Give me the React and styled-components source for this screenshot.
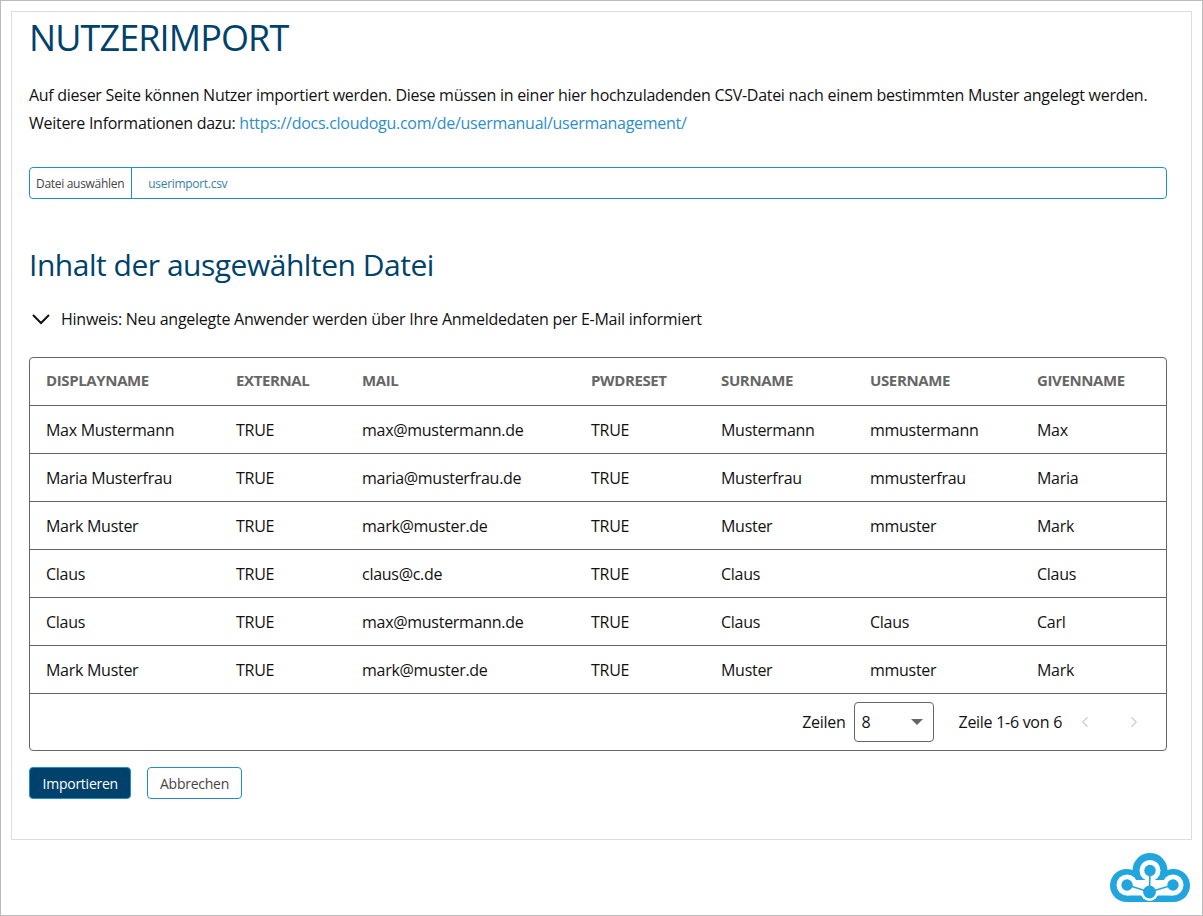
import styled, { createGlobalStyle } from "styled-components";
import { ChevronLeft, ChevronRight } from "lucide-react";

const GlobalStyle = createGlobalStyle`
  html, body {
    margin: 0;
    padding: 0;
    background: white;
    font-family: "Open Sans", sans-serif;
    letter-spacing: -0.0175em;
    color: #111;
  }
  * {
    box-sizing: border-box;
  }
`;

const Page = styled.div`
  width: 1203px;
  height: 916px;
  border: 1px solid #bbb;
  padding: 10px;
  position: relative;
  overflow: hidden;
`;

const Panel = styled.div`
  width: 1181px;
  height: 829px;
  border: 1px solid #ddd;
  padding: 0 24px 0 17px;
`;

const Title = styled.h1`
  margin: 0;
  height: 51px;
  font-size: 36px;
  line-height: 51px;
  font-weight: 400;
  letter-spacing: -0.025em;
  color: #00426b;
`;

const Intro = styled.p`
  margin: 18px 0 0;
  font-size: 16px;
  line-height: 28px;
  white-space: nowrap;
  letter-spacing: -0.0175em;
`;

const DocLink = styled.a`
  color: #2d8ec9;
  text-decoration: none;
`;

const FileInput = styled.div`
  margin-top: 30px;
  height: 32px;
  display: flex;
  align-items: center;
  border: 1px solid #1f8fc9;
  border-radius: 4px;
  font-size: 12px;
  letter-spacing: -0.025em;
`;

const FileLabel = styled.div`
  height: 100%;
  padding: 0 7px 0 6px;
  display: flex;
  align-items: center;
  border-right: 1px solid #1f8fc9;
  color: #444;
`;

const FileName = styled.div`
  padding-left: 16px;
  color: #3a7ea8;
`;

const SubTitle = styled.h2`
  margin: 42px 0 0;
  height: 48px;
  font-size: 30px;
  line-height: 48px;
  font-weight: 400;
  letter-spacing: -0.016em;
  color: #00426b;
`;

const Hint = styled.div`
  margin-top: 18px;
  height: 24px;
  display: flex;
  align-items: center;
  gap: 11px;
  padding-left: 3px;
  font-size: 16px;
  letter-spacing: -0.016em;
`;

const TableBox = styled.div`
  margin-top: 26px;
  height: 394px;
  border: 1px solid #666;
  border-radius: 4px;
`;

const Table = styled.table`
  width: 100%;
  table-layout: fixed;
  border-collapse: collapse;
  font-size: 16px;
  letter-spacing: -0.0175em;
`;

const Cell = styled.td`
  height: 48px;
  padding: 2px 0 0 16px;
  border-bottom: 1px solid #666;
  white-space: nowrap;
`;

const HeadCell = styled.th`
  height: 47px;
  padding: 0 0 2px 16px;
  border-bottom: 1px solid #666;
  text-align: left;
  font-size: 15px;
  font-weight: 700;
  letter-spacing: -0.025em;
  color: #666;
`;

const Pager = styled.div`
  height: 57px;
  display: flex;
  align-items: center;
  justify-content: flex-end;
  padding-right: 23px;
  font-size: 16px;
  letter-spacing: -0.0175em;
`;

const PageSelect = styled.div`
  width: 80px;
  height: 40px;
  margin: 0 25px 0 8px;
  padding: 0 10px 0 7px;
  display: flex;
  align-items: center;
  justify-content: space-between;
  border: 1px solid #666;
  border-radius: 4px;
`;

const Caret = styled.span`
  width: 0;
  height: 0;
  border-left: 6px solid transparent;
  border-right: 6px solid transparent;
  border-top: 6px solid #666;
`;

const PagerArrows = styled.div`
  display: flex;
  align-items: center;
  gap: 31px;
  margin-left: 14px;
  color: #ccc;
`;

const Actions = styled.div`
  margin-top: 16px;
  display: flex;
  gap: 16px;
`;

const Button = styled.button`
  height: 32px;
  padding: 0 ${(p) => (p.$primary ? "12.5px" : "11.5px")};
  border: 1px solid #1f8fc9;
  border-radius: 4px;
  background: ${(p) => (p.$primary ? "#00426b" : "white")};
  color: ${(p) => (p.$primary ? "white" : "#444")};
  font-family: inherit;
  font-size: 14px;
  letter-spacing: -0.0175em;
`;

const LogoWrap = styled.div`
  position: absolute;
  right: 12px;
  bottom: 12px;
  width: 80px;
  height: 50px;
`;

const LOGO_BLUE = "#20a5de";

const Logo = () => (
  <LogoWrap>
    <svg width="80" height="50" viewBox="0 0 80 50">
      <g fill={LOGO_BLUE}>
        <circle cx="40" cy="17.5" r="17.5" />
        <circle cx="16.5" cy="32.5" r="16.5" />
        <circle cx="63.5" cy="32.5" r="16.5" />
        <rect x="16" y="24" width="48" height="25" />
      </g>
      <g fill="white">
        <circle cx="40" cy="17.5" r="10.5" />
        <circle cx="17" cy="32" r="10.5" />
        <circle cx="63" cy="32" r="10.5" />
        <rect x="17" y="27" width="46" height="15.5" />
        <circle cx="39.5" cy="39" r="9" />
      </g>
      <path d="M40 17.5 L39.5 39 M17 32 L39.5 39 L63 32" stroke={LOGO_BLUE} strokeWidth="1.6" fill="none" />
      <g fill={LOGO_BLUE}>
        <circle cx="40" cy="17.5" r="5.7" />
        <circle cx="17" cy="32" r="5.7" />
        <circle cx="63" cy="32" r="5.7" />
        <circle cx="39.5" cy="39" r="6.4" />
      </g>
    </svg>
  </LogoWrap>
);

const HintArrow = () => (
  <svg width="18" height="11" viewBox="0 0 18 11">
    <path d="M1 1 L9 9 L17 1" stroke="#111" strokeWidth="2" fill="none" />
  </svg>
);

const columns = [
  { name: "DISPLAYNAME", width: 190 },
  { name: "EXTERNAL", width: 126 },
  { name: "MAIL", width: 229 },
  { name: "PWDRESET", width: 130 },
  { name: "SURNAME", width: 149 },
  { name: "USERNAME", width: 167 },
  { name: "GIVENNAME", width: 145 },
];

const rows = [
  ["Max Mustermann", "TRUE", "max@mustermann.de", "TRUE", "Mustermann", "mmustermann", "Max"],
  ["Maria Musterfrau", "TRUE", "maria@musterfrau.de", "TRUE", "Musterfrau", "mmusterfrau", "Maria"],
  ["Mark Muster", "TRUE", "mark@muster.de", "TRUE", "Muster", "mmuster", "Mark"],
  ["Claus", "TRUE", "claus@c.de", "TRUE", "Claus", "", "Claus"],
  ["Claus", "TRUE", "max@mustermann.de", "TRUE", "Claus", "Claus", "Carl"],
  ["Mark Muster", "TRUE", "mark@muster.de", "TRUE", "Muster", "mmuster", "Mark"],
];

const App = () => {
  return (
    <Page>
      <GlobalStyle />
      <Panel>
        <Title>NUTZERIMPORT</Title>
        <Intro>
          Auf dieser Seite können Nutzer importiert werden. Diese müssen in einer hier hochzuladenden
          CSV-Datei nach einem bestimmten Muster angelegt werden.
          <br />
          Weitere Informationen dazu:{" "}
          <DocLink href="#">https://docs.cloudogu.com/de/usermanual/usermanagement/</DocLink>
        </Intro>
        <FileInput>
          <FileLabel>Datei auswählen</FileLabel>
          <FileName>userimport.csv</FileName>
        </FileInput>
        <SubTitle>Inhalt der ausgewählten Datei</SubTitle>
        <Hint>
          <HintArrow />
          Hinweis: Neu angelegte Anwender werden über Ihre Anmeldedaten per E-Mail informiert
        </Hint>
        <TableBox>
          <Table>
            <colgroup>
              {columns.map((col) => (
                <col key={col.name} width={col.width} />
              ))}
            </colgroup>
            <thead>
              <tr>
                {columns.map((col) => (
                  <HeadCell key={col.name}>{col.name}</HeadCell>
                ))}
              </tr>
            </thead>
            <tbody>
              {rows.map((row, index) => (
                <tr key={index}>
                  {row.map((value, i) => (
                    <Cell key={i}>{value}</Cell>
                  ))}
                </tr>
              ))}
            </tbody>
          </Table>
          <Pager>
            Zeilen
            <PageSelect>
              8
              <Caret />
            </PageSelect>
            Zeile 1-6 von 6
            <PagerArrows>
              <ChevronLeft size={18} strokeWidth={1.5} />
              <ChevronRight size={18} strokeWidth={1.5} />
            </PagerArrows>
          </Pager>
        </TableBox>
        <Actions>
          <Button $primary>Importieren</Button>
          <Button>Abbrechen</Button>
        </Actions>
      </Panel>
      <Logo />
    </Page>
  );
};

export default App;
